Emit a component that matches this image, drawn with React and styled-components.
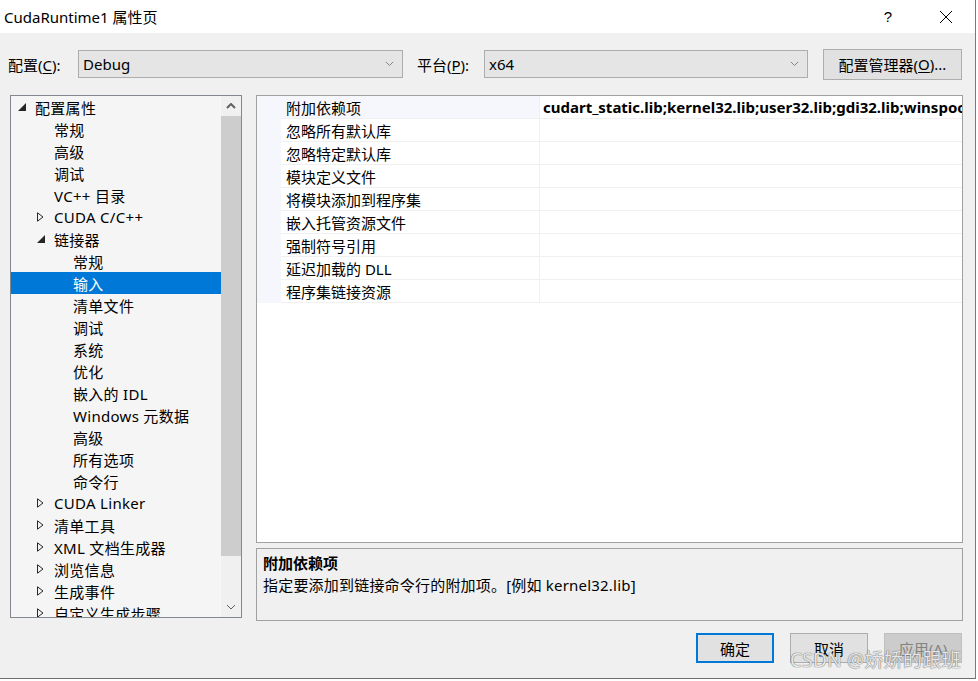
import React from "react";
import styled, { createGlobalStyle } from "styled-components";

const GlobalStyle = createGlobalStyle`
  html, body {
    margin: 0;
    padding: 0;
    background: #ffffff;
  }
  body {
    font-family: "Noto Sans", "Noto Sans CJK SC", sans-serif;
    font-size: 15px;
    color: #000;
  }
`;

const Window = styled.div`
  width: 976px;
  height: 679px;
  box-sizing: border-box;
  border-right: 1px solid #7a7a7a;
  border-bottom: 1px solid #6e6e6e;
  background: #f0f0f0;
  display: flex;
  flex-direction: column;
  position: relative;
  overflow: hidden;
`;

const TitleBar = styled.div`
  height: 33px;
  background: #ffffff;
  display: flex;
  align-items: center;
  justify-content: space-between;
  padding-left: 4px;
`;

const Title = styled.span`
  font-size: 15px;
`;

const TitleButtons = styled.div`
  display: flex;
  align-items: center;
  height: 100%;
`;

const TitleButton = styled.div`
  width: 58px;
  height: 100%;
  display: flex;
  align-items: center;
  justify-content: center;
  font-size: 15px;
  font-family: "Liberation Sans", sans-serif;
`;

const Toolbar = styled.div`
  display: flex;
  align-items: center;
  height: 32px;
  margin-top: 15px;
  padding-left: 8px;
`;

const Label = styled.span`
  width: ${(p) => p.w}px;
  flex-shrink: 0;
  font-size: 15px;
  white-space: nowrap;
`;

const Key = styled.span`
  text-decoration: underline;
  text-underline-offset: 2px;
`;

const Combo = styled.div`
  width: ${(p) => p.w}px;
  height: 28px;
  box-sizing: border-box;
  border: 1px solid #adadad;
  background: #e5e5e5;
  display: flex;
  align-items: center;
  justify-content: space-between;
  padding: 0 8px 0 4px;
  margin-right: ${(p) => p.mr}px;
  font-size: 15px;
`;

const Button = styled.div`
  width: ${(p) => p.w}px;
  height: ${(p) => p.h || 30}px;
  box-sizing: border-box;
  border: ${(p) => (p.primary ? "2px" : "1px")} solid
    ${(p) => (p.disabled ? "#bfbfbf" : p.primary ? "#0078d7" : "#adadad")};
  background: ${(p) => (p.disabled ? "#cccccc" : "#e1e1e1")};
  color: ${(p) => (p.disabled ? "#838383" : "#000")};
  display: flex;
  align-items: center;
  justify-content: center;
  font-size: 15px;
  white-space: nowrap;
`;

const Main = styled.div`
  display: flex;
  margin-top: 15px;
  padding-left: 10px;
  height: 526px;
`;

const Tree = styled.div`
  width: 232px;
  height: 523px;
  box-sizing: border-box;
  border: 1px solid #828790;
  background: #f5f5f5;
  display: flex;
  margin-right: 14px;
`;

const TreeList = styled.div`
  flex: 1;
  overflow: hidden;
`;

const TreeRow = styled.div`
  height: 22px;
  display: flex;
  align-items: center;
  padding-left: ${(p) => p.level * 19}px;
  background: ${(p) => (p.selected ? "#0078d7" : "transparent")};
  color: ${(p) => (p.selected ? "#fff" : "#000")};
  font-size: 15px;
  letter-spacing: 0.3px;
  white-space: nowrap;
`;

const Expander = styled.span`
  width: 24px;
  height: 22px;
  flex-shrink: 0;
  display: flex;
  align-items: center;
  padding-left: 7px;
  box-sizing: border-box;
`;

const ScrollBar = styled.div`
  width: 20px;
  display: flex;
  flex-direction: column;
  background: #f0f0f0;
`;

const ScrollArrow = styled.div`
  height: 20px;
  display: flex;
  align-items: center;
  justify-content: center;
`;

const Thumb = styled.div`
  height: 440px;
  background: #cdcdcd;
`;

const Track = styled.div`
  flex: 1;
`;

const RightColumn = styled.div`
  width: 707px;
  display: flex;
  flex-direction: column;
  gap: 5px;
`;

const Grid = styled.div`
  height: 448px;
  box-sizing: border-box;
  border: 1px solid #a0a0a0;
  background: #ffffff;
  overflow: hidden;
`;

const GridRow = styled.div`
  display: flex;
  height: 23px;
`;

const Gutter = styled.div`
  width: 24px;
  background: #f5f7fc;
  flex-shrink: 0;
`;

const NameCell = styled.div`
  width: 259px;
  flex-shrink: 0;
  box-sizing: border-box;
  padding-left: 5px;
  border-bottom: 1px solid #f0f0f0;
  border-right: 1px solid #f0f0f0;
  background: ${(p) => (p.active ? "#f5f7fc" : "#ffffff")};
  display: flex;
  align-items: center;
  font-size: 15px;
  white-space: nowrap;
`;

const ValueCell = styled.div`
  flex: 1;
  box-sizing: border-box;
  padding-left: 3px;
  border-bottom: 1px solid #f0f0f0;
  display: flex;
  align-items: center;
  font-weight: bold;
  font-size: 15px;
  white-space: nowrap;
  overflow: hidden;
`;

const Description = styled.div`
  height: 73px;
  box-sizing: border-box;
  border: 1px solid #a0a0a0;
  background: #f0f0f0;
  padding: 3px 6px;
  display: flex;
  flex-direction: column;
`;

const DescTitle = styled.div`
  font-weight: bold;
  font-size: 15px;
  line-height: 22px;
`;

const DescText = styled.div`
  font-size: 15px;
  line-height: 22px;
  letter-spacing: 0.2px;
`;

const Footer = styled.div`
  display: flex;
  justify-content: flex-end;
  gap: 16px;
  padding-right: 13px;
  margin-top: 12px;
`;

const Watermark = styled.div`
  position: absolute;
  right: 14px;
  bottom: 5px;
  font-size: 19px;
  color: rgba(255, 255, 255, 0.85);
  text-shadow: 0 0 1px #6a6a6a, 0 0 1px #6a6a6a;
  letter-spacing: 0.3px;
`;

const Chevron = ({ dir = "down", color = "#7a7a7a", size = 9 }) => (
  <svg width={size} height={size * 0.6} viewBox="0 0 10 6">
    <path
      d={dir === "down" ? "M1 1 L5 5 L9 1" : "M1 5 L5 1 L9 5"}
      fill="none"
      stroke={color}
      strokeWidth={dir === "down" ? 1 : 2}
    />
  </svg>
);

const OpenTri = () => (
  <svg width="8" height="8" viewBox="0 0 8 8">
    <path d="M8 0 L8 8 L0 8 Z" fill="#262626" />
  </svg>
);

const ClosedTri = () => (
  <svg width="7" height="10" viewBox="0 0 7 10">
    <path d="M0.5 0.8 L6 5 L0.5 9.2 Z" fill="none" stroke="#262626" strokeWidth="1" />
  </svg>
);

const CloseIcon = () => (
  <svg width="14" height="14" viewBox="0 0 14 14">
    <path d="M1 1 L13 13 M13 1 L1 13" stroke="#000" strokeWidth="1" />
  </svg>
);

const treeItems = [
  { level: 0, text: "配置属性", exp: "open" },
  { level: 1, text: "常规" },
  { level: 1, text: "高级" },
  { level: 1, text: "调试" },
  { level: 1, text: "VC++ 目录" },
  { level: 1, text: "CUDA C/C++", exp: "closed" },
  { level: 1, text: "链接器", exp: "open" },
  { level: 2, text: "常规" },
  { level: 2, text: "输入", selected: true },
  { level: 2, text: "清单文件" },
  { level: 2, text: "调试" },
  { level: 2, text: "系统" },
  { level: 2, text: "优化" },
  { level: 2, text: "嵌入的 IDL" },
  { level: 2, text: "Windows 元数据" },
  { level: 2, text: "高级" },
  { level: 2, text: "所有选项" },
  { level: 2, text: "命令行" },
  { level: 1, text: "CUDA Linker", exp: "closed" },
  { level: 1, text: "清单工具", exp: "closed" },
  { level: 1, text: "XML 文档生成器", exp: "closed" },
  { level: 1, text: "浏览信息", exp: "closed" },
  { level: 1, text: "生成事件", exp: "closed" },
  { level: 1, text: "自定义生成步骤", exp: "closed" },
];

const properties = [
  {
    name: "附加依赖项",
    value:
      "cudart_static.lib;kernel32.lib;user32.lib;gdi32.lib;winspool.lib;comdlg32.lib;advapi32.lib;shell32.lib",
  },
  { name: "忽略所有默认库" },
  { name: "忽略特定默认库" },
  { name: "模块定义文件" },
  { name: "将模块添加到程序集" },
  { name: "嵌入托管资源文件" },
  { name: "强制符号引用" },
  { name: "延迟加载的 DLL" },
  { name: "程序集链接资源" },
];

const App = () => {
  return (
    <>
      <GlobalStyle />
      <Window>
        <TitleBar>
          <Title>CudaRuntime1 属性页</Title>
          <TitleButtons>
            <TitleButton>?</TitleButton>
            <TitleButton>
              <CloseIcon />
            </TitleButton>
          </TitleButtons>
        </TitleBar>

        <Toolbar>
          <Label w={70}>
            配置(<Key>C</Key>):
          </Label>
          <Combo w={325} mr={14}>
            <span>Debug</span>
            <Chevron />
          </Combo>
          <Label w={67}>
            平台(<Key>P</Key>):
          </Label>
          <Combo w={324} mr={15}>
            <span>x64</span>
            <Chevron />
          </Combo>
          <Button w={139} h={31}>
            配置管理器(<Key>O</Key>)...
          </Button>
        </Toolbar>

        <Main>
          <Tree>
            <TreeList>
              {treeItems.map((item, i) => (
                <TreeRow key={i} level={item.level} selected={item.selected}>
                  <Expander>
                    {item.exp === "open" && <OpenTri />}
                    {item.exp === "closed" && <ClosedTri />}
                  </Expander>
                  {item.text}
                </TreeRow>
              ))}
            </TreeList>
            <ScrollBar>
              <ScrollArrow>
                <Chevron dir="up" color="#606060" size={10} />
              </ScrollArrow>
              <Thumb />
              <Track />
              <ScrollArrow>
                <Chevron dir="down" color="#606060" size={10} />
              </ScrollArrow>
            </ScrollBar>
          </Tree>

          <RightColumn>
            <Grid>
              {properties.map((p, i) => (
                <GridRow key={i}>
                  <Gutter />
                  <NameCell active={i === 0}>{p.name}</NameCell>
                  <ValueCell>{p.value || ""}</ValueCell>
                </GridRow>
              ))}
            </Grid>
            <Description>
              <DescTitle>附加依赖项</DescTitle>
              <DescText>指定要添加到链接命令行的附加项。[例如 kernel32.lib]</DescText>
            </Description>
          </RightColumn>
        </Main>

        <Footer>
          <Button w={78} primary>
            确定
          </Button>
          <Button w={78}>取消</Button>
          <Button w={78} disabled>
            应用(A)
          </Button>
        </Footer>

        <Watermark>CSDN @娇娇的跟班</Watermark>
      </Window>
    </>
  );
};

export default App;
